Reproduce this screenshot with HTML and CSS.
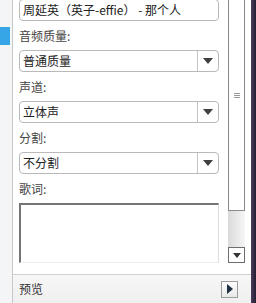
FILE: index.html
```html
<!DOCTYPE html>
<html>
<head>
<meta charset="utf-8">
<link rel="stylesheet" href="styles.css">
</head>
<body>
<div class="app">
  <aside class="side"><div class="side-sel"></div></aside>
  <div class="panel">
    <div class="upper">
      <div class="form">
        <div class="input">周延英（英子-effie） - 那个人</div>
        <div class="label">音频质量:</div>
        <div class="select"><span class="val">普通质量</span><span class="btn"><i class="tri"></i></span></div>
        <div class="label">声道:</div>
        <div class="select"><span class="val">立体声</span><span class="btn"><i class="tri"></i></span></div>
        <div class="label">分割:</div>
        <div class="select"><span class="val">不分割</span><span class="btn"><i class="tri"></i></span></div>
        <div class="label">歌词:</div>
        <div class="textarea"></div>
      </div>
      <div class="scroll">
        <div class="thumb"><span class="grip"></span></div>
        <div class="track"></div>
        <div class="down"><i class="tri-s"></i></div>
      </div>
      <div class="gutter"></div>
    </div>
    <div class="bottom">
      <span class="preview">预览</span>
      <span class="play"><i class="tri-r"></i></span>
    </div>
  </div>
  <div class="edge"></div>
</div>
</body>
</html>
```

FILE: styles.css
```css
* { box-sizing: border-box; }
html, body { margin: 0; padding: 0; }
body {
  width: 256px;
  height: 303px;
  overflow: hidden;
  background: #fff;
  font-family: "Noto Sans CJK SC", "Noto Sans", sans-serif;
  font-size: 12px;
  color: #333;
}
.app {
  display: flex;
  width: 256px;
  height: 303px;
}
.side {
  width: 13px;
  flex: none;
  background: #f3f5f7;
  border-right: 1px solid #c9c9c9;
  padding-top: 27px;
}
.side-sel {
  width: 10px;
  height: 18px;
  background: #36a6e6;
}
.panel {
  width: 238px;
  flex: none;
  display: flex;
  flex-direction: column;
  background: #fff;
}
.upper {
  height: 274px;
  display: flex;
}
.form {
  width: 215px;
  padding-left: 6px;
  display: flex;
  flex-direction: column;
}
.input, .select {
  width: 200px;
  height: 22px;
  border: 1px solid #b9b9b9;
  border-radius: 4px;
  background: #fff;
  flex: none;
}
.input {
  margin-top: -1px;
  padding-left: 3px;
  line-height: 20px;
  color: #222;
  white-space: nowrap;
  overflow: hidden;
}
.label {
  margin-top: 7px;
  height: 16px;
  line-height: 16px;
  color: #444;
}
.select {
  margin-top: 6px;
  display: flex;
}
.val {
  flex: 1;
  padding-left: 3px;
  line-height: 20px;
  color: #222;
}
.btn {
  width: 21px;
  border-left: 1px solid #c3c3c3;
  display: flex;
  align-items: center;
  justify-content: center;
}
.tri {
  width: 0;
  height: 0;
  border-left: 5px solid transparent;
  border-right: 5px solid transparent;
  border-top: 6px solid #404040;
}
.textarea {
  margin-top: 6px;
  width: 200px;
  height: 60px;
  border-top: 2px solid #757575;
  border-left: 2px solid #757575;
  border-right: 1px solid #dcdcdc;
  border-bottom: 1px solid #ececec;
}
.scroll {
  width: 17px;
  flex: none;
  display: flex;
  flex-direction: column;
}
.thumb {
  height: 211px;
  border: 1px solid #8a8a8a;
  border-top: none;
  background: #fff;
  display: flex;
  align-items: center;
  justify-content: center;
  padding-bottom: 20px;
}
.grip {
  width: 6px;
  height: 5px;
  border-top: 1px solid #9a9a9a;
  border-bottom: 1px solid #9a9a9a;
  background: linear-gradient(#fff 1px, #9a9a9a 1px, #9a9a9a 2px, #fff 2px);
}
.track {
  height: 36px;
  background: linear-gradient(to right, #dadada, #f6f6f6);
}
.down {
  height: 16px;
  border: 1px solid #6e6e6e;
  background: #fff;
  display: flex;
  align-items: center;
  justify-content: center;
}
.tri-s {
  width: 0;
  height: 0;
  border-left: 4px solid transparent;
  border-right: 4px solid transparent;
  border-top: 5px solid #333;
}
.gutter {
  width: 6px;
  flex: none;
}
.bottom {
  height: 29px;
  border-top: 1px solid #cfcfcf;
  background: linear-gradient(#f7f7f7, #efefef);
  display: flex;
  align-items: center;
  justify-content: space-between;
  padding: 0 13px 0 6px;
}
.preview {
  color: #333;
  line-height: 16px;
}
.play {
  width: 17px;
  height: 17px;
  border: 1px solid #9d9d9d;
  background: linear-gradient(#fdfdfd, #e9e9e9);
  display: flex;
  align-items: center;
  justify-content: center;
}
.tri-r {
  width: 0;
  height: 0;
  border-top: 5px solid transparent;
  border-bottom: 5px solid transparent;
  border-left: 6px solid #1d2f40;
}
.edge {
  width: 5px;
  flex: none;
  background: linear-gradient(to right, #4a3d5c, #241d30);
}
```
